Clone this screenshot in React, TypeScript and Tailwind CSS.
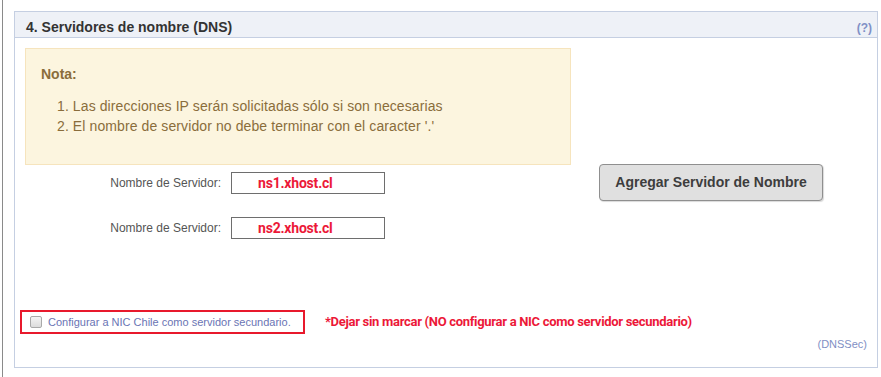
import React from "react";

export default function App() {
  return (
    <div className="w-[881px] h-[377px] bg-white overflow-hidden font-['Liberation_Sans',Arial,sans-serif]">
      <div className="ml-[2px] h-full border-l border-[#8a8a8a] pl-[11px] pt-[11px]">
        <div className="w-[864px] h-[357px] border border-[#c5cfe2] flex flex-col">
          {/* header */}
          <div className="h-[26px] bg-[#eef1f7] border-b border-[#c5cfe2] flex items-center justify-between pl-[11px] pr-[5px]">
            <span className="text-[14px] font-bold text-[#333] mt-[6px]">4. Servidores de nombre (DNS)</span>
            <span className="text-[12px] font-bold text-[#8090c6] mt-[6px]">(?)</span>
          </div>
          {/* body */}
          <div className="flex-1 flex flex-col">
            <div className="flex pl-[10px] pt-[10px]">
              <div className="w-[546px] flex flex-col">
                <div className="h-[117px] bg-[#fcf5df] border border-[#f6e4bd] pl-[15px] pt-[16px] text-[#8a6d3b]">
                  <div className="text-[14px] font-bold leading-[18px]">Nota:</div>
                  <ol className="mt-[13px] pl-[16px] text-[14px] leading-[20px] tracking-[0.1px]">
                    <li>1. Las direcciones IP serán solicitadas sólo si son necesarias</li>
                    <li>2. El nombre de servidor no debe terminar con el caracter '.'</li>
                  </ol>
                </div>
                <div className="flex items-center mt-[7px]">
                  <div className="w-[196px] text-right text-[12px] text-[#555]">Nombre de Servidor:</div>
                  <div className="ml-[10px] w-[154px] h-[22px] border border-[#6e6e6e] flex items-center pl-[26px] font-['Roboto',sans-serif] font-bold text-[14px] text-[#ec1838] tracking-[-0.2px]">
                    ns1.xhost.cl
                  </div>
                </div>
                <div className="flex items-center mt-[23px]">
                  <div className="w-[196px] text-right text-[12px] text-[#555]">Nombre de Servidor:</div>
                  <div className="ml-[10px] w-[154px] h-[22px] border border-[#6e6e6e] flex items-center pl-[26px] font-['Roboto',sans-serif] font-bold text-[14px] text-[#ec1838] tracking-[-0.2px]">
                    ns2.xhost.cl
                  </div>
                </div>
              </div>
              <div className="ml-[28px] pt-[116px]">
                <button className="w-[224px] h-[37px] bg-[#e0e0e0] border border-[#8f8f8f] rounded-[4px] text-[14px] font-bold text-[#3d3d3d] shadow-[1px_1px_1px_rgba(0,0,0,0.15)]">
                  Agregar Servidor de Nombre
                </button>
              </div>
            </div>
            <div className="flex items-center pl-[5px] mt-[71px]">
              <div className="w-[285px] h-[24px] border-2 border-[#e8192c] flex items-center pl-[8px]">
                <span className="w-[12px] h-[12px] rounded-[2px] border border-[#a9a9a9] bg-gradient-to-b from-[#f4f4f4] to-[#dcdcdc]" />
                <span className="ml-[6px] text-[11px] text-[#6a74b4]">Configurar a NIC Chile como servidor secundario.</span>
              </div>
              <span className="ml-[20px] font-['Roboto',sans-serif] font-bold text-[13px] text-[#ec1838] tracking-[-0.3px]">
                *Dejar sin marcar (NO configurar a NIC como servidor secundario)
              </span>
            </div>
            <div className="flex justify-end pr-[10px] mt-[2px]">
              <span className="text-[11px] text-[#7f8fc4]">(DNSSec)</span>
            </div>
          </div>
        </div>
      </div>
    </div>
  );
}
